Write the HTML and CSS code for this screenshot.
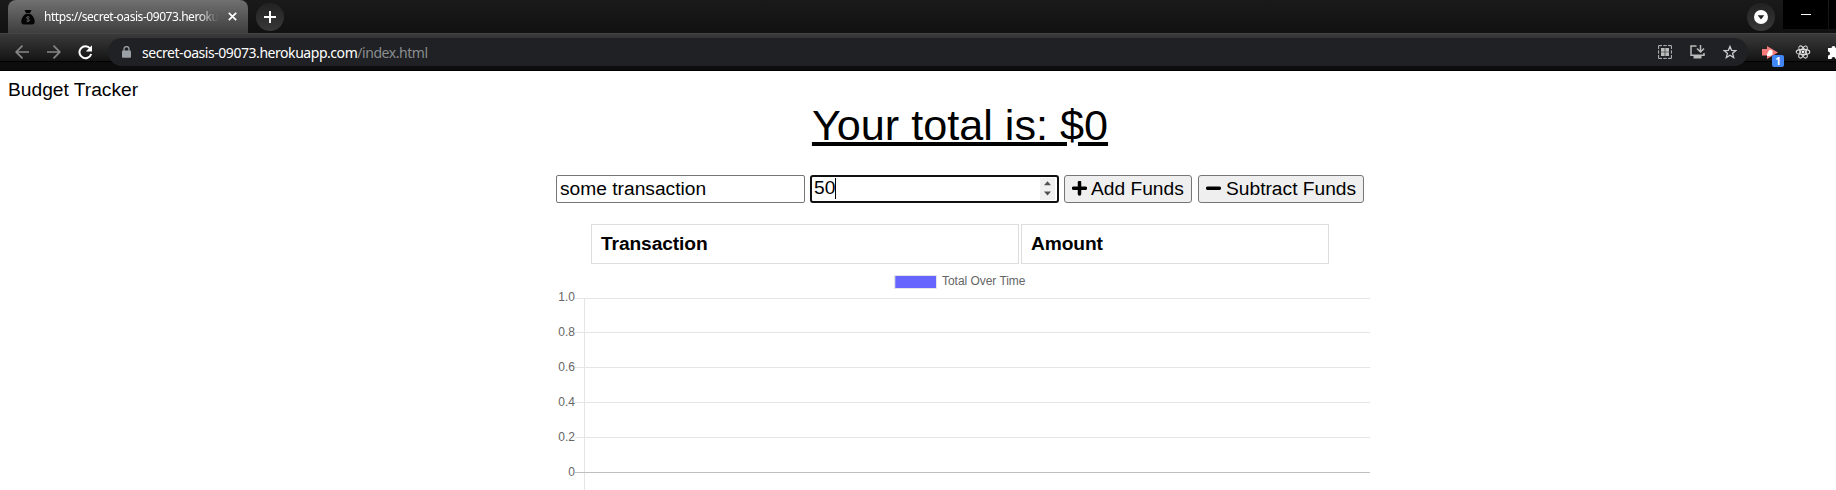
FILE: index.html
```html
<!DOCTYPE html>
<html lang="en">
<head>
<meta charset="utf-8">
<title>Budget Tracker</title>
<link rel="stylesheet" href="styles.css">
</head>
<body>
<header class="browser">
  <div class="tabs">
    <div class="tab">
      <svg class="favicon" width="14" height="16" viewBox="0 0 14 16"><path d="M3.500 1h7L9 4H5zM5 4.700h4C12 6.500 13.700 9.500 13.700 12.500 13.700 14.500 13 15.500 11 15.500H3C1 15.500.3 14.500.3 12.500.3 9.500 2 6.500 5 4.700z" fill="#050505"/><path d="M8.600 8.300Q7 7.200 5.500 8.400 5.200 9.600 7 9.900T8.500 11.700Q7 13 5.300 11.900M7 7v6" fill="none" stroke="#666" stroke-width=".8"/></svg>
      <span class="tab-title">https://secret-oasis-09073.heroku</span>
      <svg class="close" width="9" height="9" viewBox="0 0 9 9"><path d="M.8.8l7.400 7.400M8.200.8L.8 8.200" stroke="#fff" stroke-width="1.700"/></svg>
    </div>
    <div class="round new-tab"><svg width="12" height="12" viewBox="0 0 12 12"><path d="M6 0v12M0 6h12" stroke="#fff" stroke-width="2"/></svg></div>
    <div class="round search-tabs"><svg width="14" height="14" viewBox="0 0 14 14"><circle cx="7" cy="7" r="7" fill="#fff"/><path d="M3.700 5.200h6.600L7 9.500z" fill="#222"/></svg></div>
    <div class="minimize"><i></i></div>
    <div class="maximize"></div>
  </div>
  <div class="toolbar">
    <svg class="nav" width="14" height="14" viewBox="0 0 14 14"><path d="M14 7H1.200M7.500.7L1.200 7l6.300 6.300" fill="none" stroke="#868686" stroke-width="1.700"/></svg>
    <svg class="nav forward" width="14" height="14" viewBox="0 0 14 14"><path d="M0 7h12.800M6.500.7L12.800 7l-6.300 6.300" fill="none" stroke="#868686" stroke-width="1.700"/></svg>
    <svg class="nav reload" width="15" height="15" viewBox="0 0 15 15"><path d="M12.200 3.500A6 6 0 1 0 13.200 9" fill="none" stroke="#fff" stroke-width="2"/><path d="M14 .3v6.200H7.800z" fill="#fff"/></svg>
    <div class="address">
      <svg class="lock" width="9" height="12" viewBox="0 0 9 12"><path d="M2 5V3a2.500 2.500 0 0 1 5 0v2" fill="none" stroke="#9aa0a6" stroke-width="1.300"/><rect y="4.500" width="9" height="7.300" rx="1" fill="#9aa0a6"/></svg>
      <span class="url">secret-oasis-09073.herokuapp.com<span class="path">/index.html</span></span>
      <svg class="qr" width="14" height="14" viewBox="0 0 14 14"><path d="M.6 4V.6H4M10 .6h3.400V4M13.400 10v3.400H10M4 13.400H.6V10M5.300.6h3.400M5.300 13.400h3.400M.6 5.300v3.400M13.400 5.300v3.400" fill="none" stroke="#bbb" stroke-width="1"/><path d="M3 3h3.700v3.700H3zM7.300 3H11v3.700H7.300zM3 7.300h3.700V11H3zM7.300 7.300H11V11H7.300z" fill="#bbb"/></svg>
      <svg class="install" width="15" height="14" viewBox="0 0 15 14"><path d="M6.500 1H1v9.300h13V8M10.500 0v6.500M7 3.500l3.500 3.500L14 3.500" fill="none" stroke="#bbb" stroke-width="1.500"/><path d="M3.500 10.500h8v3h-8z" fill="#bbb"/></svg>
      <svg class="star" width="14" height="14" viewBox="0 0 14 14"><path d="M7 1.400l1.600 3.900 4.300.3-3.300 2.700 1.100 4.300L7 10.300l-3.700 2.300 1.100-4.300L1.100 5.600l4.300-.3z" fill="none" stroke="#ccc" stroke-width="1.300"/></svg>
    </div>
    <div class="extension">
      <svg width="16" height="13" viewBox="0 0 16 13"><path d="M0 3h5V0l11 6.500L5 13V9.500H0z" fill="#f47c7c"/><path d="M5 8l2.500-4.500 3 1V8.500L8 10H5z" fill="#fff"/></svg>
      <span class="badge">1</span>
    </div>
    <svg class="react" width="16" height="16" viewBox="0 0 16 16"><g fill="none" stroke="#ddd" stroke-width="1.100"><ellipse cx="8" cy="8" rx="6.800" ry="2.600"/><ellipse cx="8" cy="8" rx="6.800" ry="2.600" transform="rotate(60 8 8)"/><ellipse cx="8" cy="8" rx="6.800" ry="2.600" transform="rotate(120 8 8)"/></g><circle cx="8" cy="8" r="1.400" fill="#eee"/></svg>
    <svg class="puzzle" width="15" height="15" viewBox="0 0 15 15"><path d="M1 3h3.500a2 2 0 1 1 4 0H12v3.500a2 2 0 1 1 0 4V14H8.500a2 2 0 0 0-4 0H1v-3.500a2 2 0 0 0 0-4z" fill="#fff"/></svg>
  </div>
</header>
<main class="page">
  <div class="brand">Budget Tracker</div>
  <div class="wrapper">
    <div class="total">Your total is: <span class="currency">$</span>0</div>
    <form class="form">
      <div class="field">some transaction</div>
      <div class="field focused"><span class="amount">50</span><span class="spinner"><svg width="7" height="15" viewBox="0 0 7 15"><path d="M0 4.300L3.500.3 7 4.300zM0 10.500h7l-3.500 4z" fill="#505050"/></svg></span></div>
      <button class="button add" type="button"><svg width="15" height="15" viewBox="0 0 15 15"><path d="M7.500 1.500v11.500M1.500 7.200h12" stroke="#000" stroke-width="3.500" stroke-linecap="round"/></svg><span>Add Funds</span></button>
      <button class="button subtract" type="button"><svg width="15" height="15" viewBox="0 0 15 15"><path d="M1.700 7.200h11.600" stroke="#000" stroke-width="3.500" stroke-linecap="round"/></svg><span>Subtract Funds</span></button>
    </form>
    <div class="table"><div class="cell">Transaction</div><div class="cell">Amount</div></div>
    <svg class="chart" width="820" height="226" viewBox="550 264 820 226">
      <rect x="894" y="275" width="43" height="14" fill="#e5e5e5"/>
      <rect x="895.300" y="276" width="40.700" height="12" fill="#6666ff"/>
      <text x="942" y="285" textLength="83.500">Total Over Time</text>
      <path class="grid" d="M575 298.500h795M575 332.500h795M575 367.500h795M575 402.500h795M575 437.500h795M584.500 298v192"/>
      <path class="zero" d="M575 472.500h795"/>
      <g text-anchor="end"><text x="575" y="301">1.0</text><text x="575" y="336">0.8</text><text x="575" y="371">0.6</text><text x="575" y="406">0.4</text><text x="575" y="441">0.2</text><text x="575" y="476">0</text></g>
    </svg>
  </div>
</main>
</body>
</html>
```
FILE: styles.css
```css
* { box-sizing: border-box; }
body { margin: 0; height: 490px; overflow: hidden; background: #fff; color: #000; font-family: "Liberation Sans", Arial, sans-serif; }
svg { display: block; flex: none; }
.browser { height: 71px; overflow: hidden; background: #000; font-family: "Noto Sans", sans-serif; color: #fff; }
.tabs { display: flex; height: 33px; background: linear-gradient(#1a1a1a, #111); }
.tab { display: flex; align-items: center; width: 240px; height: 33px; margin-left: 8px; padding: 0 12px 0 13px; border-radius: 8px 8px 0 0; background: linear-gradient(#707070, #3e3e3e); }
.tab-title { flex: none; width: 175px; margin-left: 9px; white-space: nowrap; font-size: 12px; letter-spacing: -.45px; -webkit-mask-image: linear-gradient(90deg, #000 88%, transparent); mask-image: linear-gradient(90deg, #000 88%, transparent); }
.close { margin-left: 9px; }
.round { display: flex; align-items: center; justify-content: center; width: 28px; height: 28px; margin-top: 3px; border-radius: 50%; background: linear-gradient(#222, #383838); }
.new-tab { margin-left: 8px; }
.search-tabs { margin-left: auto; margin-right: 8px; }
.minimize { display: flex; align-items: center; justify-content: center; width: 45px; height: 29px; background: #000; }
.minimize i { width: 10px; height: 1px; background: #fff; }
.maximize { width: 7px; height: 29px; margin-left: 1px; background: #000; }
.toolbar { display: flex; align-items: center; height: 37px; padding-left: 15px; overflow: hidden; border-top: 1px solid #444; background: linear-gradient(#3a3a3a, #141414 27px, #000 27px, #000 28px, #0d0d0d 28px); }
.forward { margin-left: 18px; }
.reload { margin-left: 17px; }
.address { display: flex; flex: none; align-items: center; width: 1640px; height: 28px; margin-left: 15px; padding: 0 11px 0 14px; border-radius: 14px; background: #202124; }
.url { margin-left: 11px; font-size: 14px; letter-spacing: -.45px; white-space: nowrap; }
.path { color: #8b8d90; }
.qr { margin-left: auto; }
.install, .star { margin-left: 18px; }
.extension { position: relative; flex: none; width: 16px; margin-left: 14px; }
.badge { position: absolute; left: 10px; top: 9px; width: 12px; height: 12px; border-radius: 2px; background: #4285f4; font: bold 10px/12px "Noto Sans", sans-serif; text-align: center; }
.react { margin-left: 17px; }
.puzzle { margin-left: 16px; }
.page { padding-top: 8px; font-size: 19.2px; line-height: 22px; }
.brand { padding-left: 8px; }
.wrapper { display: flex; flex-direction: column; width: 820px; margin-left: 550px; }
.total { margin-top: -1px; height: 50px; align-self: center; font-size: 43.2px; line-height: 50px; text-decoration: underline; text-decoration-thickness: 4px; white-space: nowrap; }
/* Break in the underline below the currency sign */
.currency { position: relative; }
.currency::after { content: ""; position: absolute; left: 7px; bottom: 0; width: 11px; height: 6px; background: #fff; }
.form { display: flex; gap: 5px; margin: 25px 0 0 6px; }
.field { display: flex; align-items: center; width: 249px; height: 28px; padding: 0 3px 1px; border: 1px solid #767676; border-radius: 2px; white-space: nowrap; }
.focused { padding: 0 2px 1px; border: 2px solid #101010; border-radius: 3px; }
.amount { height: 21px; line-height: 20px; border-right: 1px solid #000; }
.spinner { display: flex; align-items: center; justify-content: center; width: 15px; height: 22px; margin-left: auto; background: #f0f0f0; }
.button { display: flex; align-items: center; height: 28px; padding: 0 7px 1px; border: 1px solid #767676; border-radius: 3px; background: #efefef; color: #000; font: 19.2px/22px "Liberation Sans", Arial, sans-serif; white-space: nowrap; }
.add { width: 128px; gap: 4px; }
.subtract { width: 166px; margin-left: 1px; gap: 5px; }
.table { display: grid; grid-template-columns: 428px 308px; gap: 2px; margin: 21px 0 0 41px; }
.cell { height: 40px; padding: 0 9px; border: 1px solid #ddd; font-weight: bold; line-height: 37px; letter-spacing: -.1px; }
.chart { font: 12px "Liberation Sans", Arial, sans-serif; fill: #666; }
.grid { stroke: #e5e5e5; fill: none; }
.zero { stroke: #bfbfbf; fill: none; }
```
